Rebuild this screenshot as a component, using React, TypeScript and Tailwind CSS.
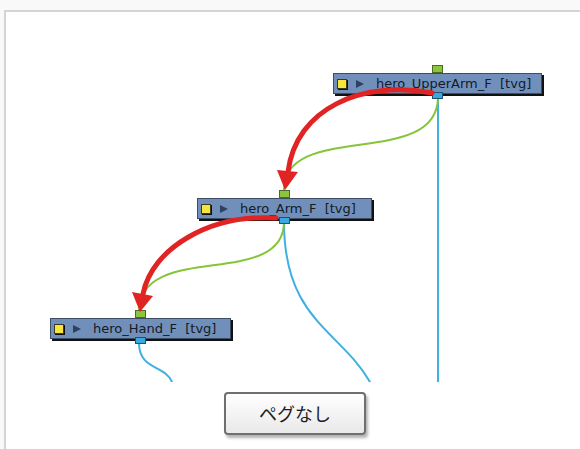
import React from 'react'

interface PegNode {
  name: string
  x: number
  y: number
  w: number
}

// canvas origin sits at page (6,12), inside the panel border
const OX = 6
const OY = 12

const nodes: PegNode[] = [
  { name: 'hero_UpperArm_F  [tvg]', x: 333, y: 72, w: 209 },
  { name: 'hero_Arm_F  [tvg]', x: 197, y: 197, w: 175 },
  { name: 'hero_Hand_F  [tvg]', x: 50, y: 317, w: 181 },
]

function NodeBox({ node }: { node: PegNode }) {
  return (
    <div
      className="absolute"
      style={{ left: node.x - OX, top: node.y - OY - 7, width: node.w + 2 }}
    >
      {/* input port */}
      <div className="flex justify-center" style={{ width: node.w }}>
        <div className="w-[11px] h-[8px] bg-[#8cc43c] border border-[#4d6b22]" />
      </div>
      <div
        className="flex items-center h-[21px] bg-[#7090bb] border border-[#3e4d63] shadow-[2px_2px_0_#111]"
        style={{ width: node.w }}
      >
        <div className="ml-[3px] w-[10px] h-[10px] bg-[#f7e43c] border border-[#3a3a1a] shadow-[1px_1px_0_#111]" />
        <svg width="10" height="10" viewBox="0 0 10 10" className="ml-[8px]">
          <path d="M1 1 L9 5 L1 9 Z" fill="#2d4060" />
        </svg>
        <span className="ml-[11px] text-[13px] leading-none text-[#141a26] whitespace-pre font-['DejaVu_Sans',sans-serif]">
          {node.name}
        </span>
      </div>
      {/* output port */}
      <div className="flex justify-center" style={{ width: node.w }}>
        <div className="w-[11px] h-[7px] -mt-[2px] bg-[#3aa8dc] border border-[#1e5470]" />
      </div>
    </div>
  )
}

function Wires() {
  return (
    <svg
      className="absolute left-0 top-0"
      width="574"
      height="370"
      viewBox={`${OX} ${OY} 574 370`}
    >
      <g fill="none" strokeWidth="2" strokeLinecap="round">
        <path d="M438 97 L438 382" stroke="#3fb0e2" />
        <path d="M284 222 C 284 320, 340 330, 370 382" stroke="#3fb0e2" />
        <path d="M139 343 C 139 370, 165 365, 172 382" stroke="#3fb0e2" />
        <path d="M438 97 C 438 170, 284 120, 284 190" stroke="#86c43a" />
        <path d="M284 222 C 284 290, 139 240, 139 312" stroke="#86c43a" />
      </g>
    </svg>
  )
}

// red arrows are painted over the nodes
function Arrows() {
  return (
    <svg
      className="absolute left-0 top-0 pointer-events-none"
      width="574"
      height="370"
      viewBox={`${OX} ${OY} 574 370`}
    >
      <g fill="none" stroke="#e02423" strokeWidth="5" strokeLinecap="round">
        <path d="M432 93 C 362 80, 296 108, 288 172" />
        <path d="M276 218 C 210 214, 152 248, 143 294" />
      </g>
      <g fill="#e02423">
        <path d="M277 170 L298 172 L285 190 Z" />
        <path d="M132 292 L153 296 L140 312 Z" />
      </g>
    </svg>
  )
}

export default function App() {
  return (
    <div className="w-[580px] h-[449px] bg-[#f9f9f9] pt-[10px] pl-[4px] overflow-hidden">
      <div className="h-full bg-white border-t-2 border-l-2 border-[#d4d4d4] flex flex-col">
        <div className="relative h-[370px] shrink-0">
          <Wires />
          {nodes.map((n) => (
            <NodeBox key={n.name} node={n} />
          ))}
          <Arrows />
        </div>
        <div className="flex justify-center mt-[10px] pl-[4px]">
          <button className="w-[142px] h-[43px] rounded-[4px] border-2 border-[#6f6f6f] bg-gradient-to-b from-white to-[#e9e9e9] shadow-[2px_3px_3px_rgba(0,0,0,0.3)] text-[18px] text-[#1e1e1e] font-['Noto_Sans_CJK_JP',sans-serif]">
            ペグなし
          </button>
        </div>
      </div>
    </div>
  )
}
